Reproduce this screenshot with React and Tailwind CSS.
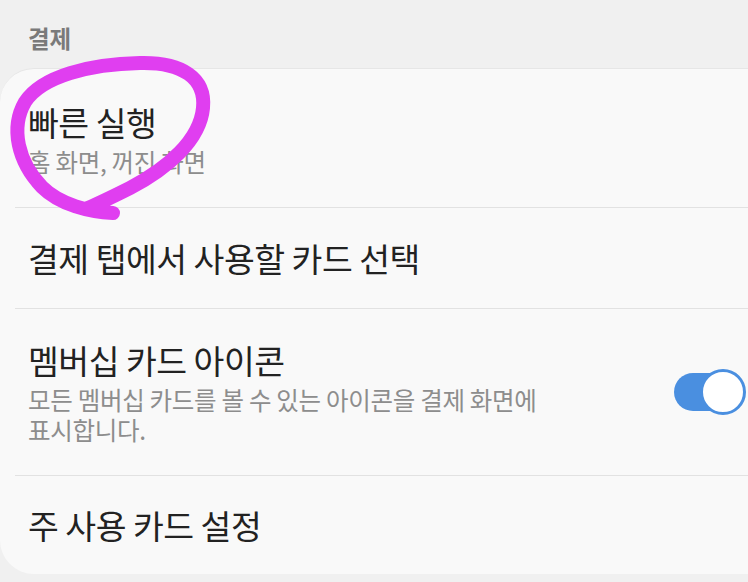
import React from "react";

const FONT = { fontFamily: '"Noto Sans CJK KR", "Noto Sans", sans-serif' };

function Toggle({ on }) {
  return (
    <div className="relative w-[72px] h-[46px] flex items-center shrink-0">
      <div className={`w-[64px] h-[38px] rounded-full ${on ? "bg-[#4a8fe0]" : "bg-[#c8c8c8]"}`} />
      <div className="absolute right-0 top-0 w-[46px] h-[46px] rounded-full bg-white border-[3px] border-[#4a8fe0]" />
    </div>
  );
}

function Row({ title, sub, height, toggle, last }) {
  return (
    <>
      <div className={`flex items-center justify-between pl-[28px] pr-[2px] ${height}`}>
        <div className="flex flex-col">
          <p className="text-[33.5px] leading-[40px] text-[#222] tracking-[-0.5px]">{title}</p>
          {sub && (
            <p className="text-[24.5px] leading-[30px] text-[#8d8d8d] mt-[5px] max-w-[560px] break-keep tracking-[-0.3px]">{sub}</p>
          )}
        </div>
        {toggle && <Toggle on />}
      </div>
      {!last && <div className="ml-[15px] h-px bg-[#e2e2e2]" />}
    </>
  );
}

export default function App() {
  return (
    <div className="relative w-[748px] h-[582px] overflow-hidden bg-[#f0f0f0]" style={FONT}>
      <div className="pt-[22px] pl-[28px] h-[68px]">
        <p className="text-[23.5px] leading-[32px] font-bold text-[#7a7a7a]">결제</p>
      </div>

      <div className="bg-[#f9f9f9] rounded-l-[34px] border-t border-[#e6e6e6] h-[506px]">
        <Row title="빠른 실행" sub="홈 화면, 꺼진 화면" height="h-[138px] pt-[2px]" />
        <Row title="결제 탭에서 사용할 카드 선택" height="h-[100px]" />
        <Row
          title="멤버십 카드 아이콘"
          sub="모든 멤버십 카드를 볼 수 있는 아이콘을 결제 화면에 표시합니다."
          height="h-[166px]"
          toggle
        />
        <Row title="주 사용 카드 설정" height="h-[98px]" last />
      </div>

      {/* hand-drawn annotation */}
      <svg className="absolute left-0 top-0 pointer-events-none" width="240" height="230" viewBox="0 0 240 230">
        <path
          d="M113 213 C 90 212, 60 205, 42 187 C 18 162, 10 128, 25 102 C 42 76, 90 64, 140 63 C 182 62, 206 78, 203 108 C 200 140, 168 168, 130 188 C 110 198, 95 205, 88 208"
          fill="none"
          stroke="#e03ef0"
          strokeWidth="14"
          strokeLinecap="round"
          strokeLinejoin="round"
        />
      </svg>
    </div>
  );
}
